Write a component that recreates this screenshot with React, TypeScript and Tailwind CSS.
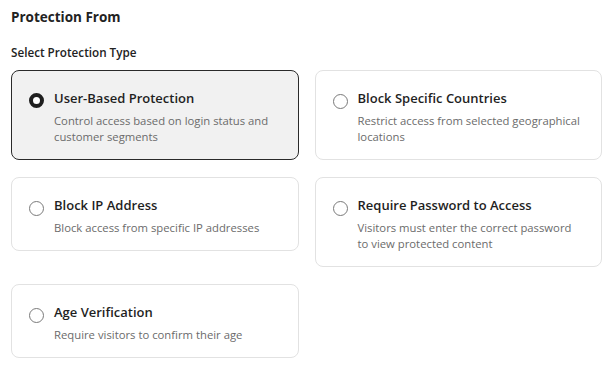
const options = [
  {
    id: 'user',
    title: 'User-Based Protection',
    desc: 'Control access based on login status and customer segments',
  },
  {
    id: 'countries',
    title: 'Block Specific Countries',
    desc: 'Restrict access from selected geographical locations',
  },
  {
    id: 'ip',
    title: 'Block IP Address',
    desc: 'Block access from specific IP addresses',
  },
  {
    id: 'password',
    title: 'Require Password to Access',
    desc: 'Visitors must enter the correct password to view protected content',
  },
  {
    id: 'age',
    title: 'Age Verification',
    desc: 'Require visitors to confirm their age',
  },
]

function Radio({ checked }: { checked: boolean }) {
  return checked ? (
    <span className="mt-[5px] w-[15px] h-[15px] shrink-0 rounded-full border-[4px] border-[#1f1f1f] bg-white" />
  ) : (
    <span className="mt-[6px] w-[15px] h-[15px] shrink-0 rounded-full border border-[#7a7a7a] bg-white" />
  )
}

export default function App() {
  const selected = 'user'
  return (
    <div
      className="w-[613px] h-[368px] bg-white px-[11px] pt-[8px] text-[#222]"
      style={{ fontFamily: '"Open Sans", "Noto Sans", sans-serif' }}
    >
      <h2 className="text-[13.5px] font-bold leading-[18px]">Protection From</h2>
      <p className="mt-[18px] text-[11.7px] font-semibold leading-[16px]">Select Protection Type</p>
      <div className="mt-[10px] grid grid-cols-2 gap-x-[16px] gap-y-[17px] items-start">
        {options.map((o) => {
          const on = o.id === selected
          return (
            <label
              key={o.id}
              className={
                on
                  ? 'flex gap-[10px] rounded-[8px] border border-[#2a2a2a] bg-[#f1f1f1] pl-[17px] pr-[16px] pt-[17px] pb-[14px]'
                  : 'flex gap-[10px] rounded-[8px] border border-[#e2e2e2] bg-white pl-[17px] pr-[16px] pt-[17px] pb-[14px]'
              }
            >
              <Radio checked={on} />
              <div className="flex flex-col">
                <span className="text-[13px] font-semibold leading-[20px] text-[#1f1f1f]">{o.title}</span>
                <span className="mt-[5px] text-[11.3px] leading-[16px] text-[#6b6b6b]">{o.desc}</span>
              </div>
            </label>
          )
        })}
      </div>
    </div>
  )
}
